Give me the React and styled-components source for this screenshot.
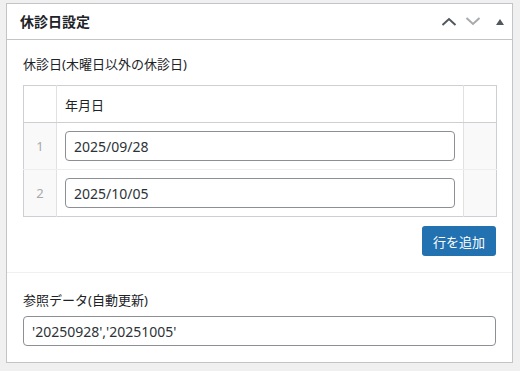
import React from 'react'
import styled, { createGlobalStyle } from 'styled-components'

const Global = createGlobalStyle`
  body {
    margin: 0;
    background: #f0f0f1;
    font-family: "Noto Sans", "Noto Sans CJK JP", sans-serif;
    color: #1d2327;
  }
`

const Panel = styled.div`
  margin: 3px 7px 0 6px;
  background: #fff;
  border: 1px solid #c3c4c7;
`

const Header = styled.div`
  display: flex;
  align-items: center;
  height: 35px;
  padding: 0 0 0 13px;
  border-bottom: 1px solid #c3c4c7;
`

const Title = styled.h2`
  flex: 1;
  margin: 0;
  font-size: 14px;
  font-weight: 700;
  line-height: 1;
`

const IconButton = styled.span`
  display: flex;
  align-items: center;
  justify-content: center;
  width: 24px;
  height: 24px;
  margin-left: ${p => p.$shift || 0}px;
  color: ${p => (p.$muted ? '#a7aaad' : '#50575e')};
`

const Section = styled.div`
  padding: ${p => p.$pad};
  border-top: ${p => (p.$divided ? '1px solid #f0f0f1' : 'none')};
`

const Label = styled.div`
  font-size: 13px;
  line-height: 18px;
  margin-bottom: ${p => p.$gap}px;
`

const Table = styled.table`
  width: 474px;
  border-collapse: collapse;
  border: 1px solid #ccd0d4;
  table-layout: fixed;
`

const Th = styled.th`
  height: 36px;
  padding: 0 8px;
  text-align: left;
  font-size: 13px;
  font-weight: 400;
  background: #fff;
  border-bottom: 1px solid #ccd0d4;
  border-left: 1px solid #e1e1e1;
  &:first-child { border-left: none; }
`

const Td = styled.td`
  height: 46px;
  padding: 0 8px 0 8px;
  border-bottom: 1px solid #eee;
  border-left: 1px solid #e1e1e1;
  &:first-child { border-left: none; }
  background: ${p => (p.$side ? '#f9f9f9' : '#fff')};
  color: #a7aaad;
  font-size: 13px;
  text-align: ${p => (p.$num ? 'center' : 'left')};
  tr:last-child & { border-bottom: none; }
`

const Input = styled.input`
  box-sizing: border-box;
  display: block;
  width: 100%;
  height: 30px;
  padding: 0 8px;
  border: 1px solid #8c8f94;
  border-radius: 4px;
  font-family: inherit;
  font-size: 14px;
  color: #2c3338;
  background: #fff;
  outline: none;
`

const Actions = styled.div`
  display: flex;
  justify-content: flex-end;
  padding: 9px 1px 0 0;
`

const Button = styled.button`
  height: 30px;
  width: 74px;
  border: none;
  border-radius: 3px;
  background: #2271b1;
  color: #fff;
  font-family: inherit;
  font-size: 13px;
  padding: 0;
`

const Chevron = ({ up }) => (
  <svg width="16" height="9" viewBox="0 0 16 9">
    <polyline
      points={up ? '1.5,8 8,2 14.5,8' : '1.5,1 8,7 14.5,1'}
      fill="none"
      stroke="currentColor"
      strokeWidth="2"
    />
  </svg>
)

const Triangle = () => (
  <svg width="8" height="6" viewBox="0 0 8 6">
    <polygon points="4,0 8,6 0,6" fill="currentColor" />
  </svg>
)

const rows = ['2025/09/28', '2025/10/05']

export default function App() {
  return (
    <>
      <Global />
      <Panel>
        <Header>
          <Title>休診日設定</Title>
          <IconButton><Chevron up /></IconButton>
          <IconButton $muted><Chevron /></IconButton>
          <IconButton $shift={3}><Triangle /></IconButton>
        </Header>
        <Section $pad="15px 15px 16px 16px">
          <Label $gap={12}>休診日(木曜日以外の休診日)</Label>
          <Table>
            <colgroup>
              <col style={{ width: 33 }} />
              <col />
              <col style={{ width: 33 }} />
            </colgroup>
            <thead>
              <tr>
                <Th />
                <Th>年月日</Th>
                <Th />
              </tr>
            </thead>
            <tbody>
              {rows.map((d, i) => (
                <tr key={d}>
                  <Td $side $num>{i + 1}</Td>
                  <Td><Input defaultValue={d} /></Td>
                  <Td $side />
                </tr>
              ))}
            </tbody>
          </Table>
          <Actions>
            <Button>行を追加</Button>
          </Actions>
        </Section>
        <Section $divided $pad="18px 16px 16px 16px">
          <Label $gap={7}>参照データ(自動更新)</Label>
          <Input defaultValue="'20250928','20251005'" />
        </Section>
      </Panel>
    </>
  )
}
